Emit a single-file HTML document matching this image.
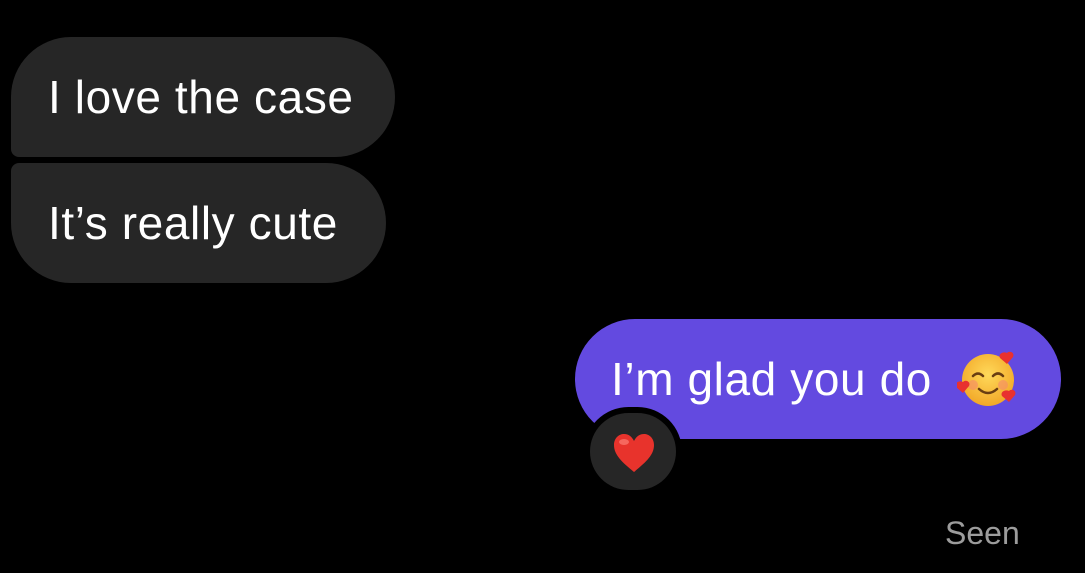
<!DOCTYPE html>
<html><head><meta charset="utf-8"><style>
html,body{margin:0;padding:0;background:#000;width:1085px;height:573px;overflow:hidden;position:relative;font-family:"Liberation Sans",sans-serif;color:#fff}
.b{position:absolute;font-size:46px;letter-spacing:0.6px;line-height:120px;box-sizing:border-box;white-space:nowrap}
.g{background:#262626}
</style></head><body>
<div class="b g" style="left:11px;top:37px;width:384px;height:120px;border-radius:60px 60px 60px 8px;padding-left:37px">I love the case</div>
<div class="b g" style="left:11px;top:163px;width:375px;height:120px;border-radius:8px 60px 60px 60px;padding-left:37px">It’s really cute</div>
<div class="b" style="left:575px;top:319px;width:486px;height:120px;border-radius:60px;background:#634ae0;padding-left:36px">I’m glad you do</div>
<svg style="position:absolute;left:957px;top:349px" width="64" height="60" viewBox="0 0 64 60">
<defs><radialGradient id="f" cx="50%" cy="40%" r="60%"><stop offset="0" stop-color="#ffd95a"/><stop offset="1" stop-color="#f2a828"/></radialGradient></defs>
<circle cx="31" cy="31" r="26" fill="url(#f)"/>
<circle cx="16" cy="36" r="5" fill="#f58a6a" opacity=".6"/><circle cx="46" cy="36" r="5" fill="#f58a6a" opacity=".6"/>
<path d="M16 27q5-5 10 0M36 27q5-5 10 0M22 40q9 8 18 0" stroke="#6a3e12" stroke-width="2.5" fill="none" stroke-linecap="round"/>
<path d="M50 4c3-3 8 0 6 4l-6 7-7-6c-2-4 3-7 7-5z" fill="#e8312f"/>
<path d="M6 33c3-3 8 0 6 4l-6 7-7-6c-2-4 3-7 7-5z" fill="#e8312f"/>
<path d="M52 42c3-3 8 0 6 4l-6 7-7-6c-2-4 3-7 7-5z" fill="#e8312f"/>
</svg>
<div style="position:absolute;left:584px;top:407px;width:98px;height:89px;border-radius:45px;background:#000"></div>
<div style="position:absolute;left:590px;top:413px;width:86px;height:77px;border-radius:39px;background:#262626"></div>
<svg style="position:absolute;left:612px;top:432px" width="44" height="42" viewBox="0 0 44 42">
<path d="M22 40C10 30 2 23 2 13 2 6 7 2 12 2c5 0 8 3 10 7 2-4 5-7 10-7 5 0 10 4 10 11 0 10-8 17-20 27z" fill="#e8332c"/>
<ellipse cx="12" cy="10" rx="5" ry="3" fill="#ff8a80" opacity=".6"/>
</svg>
<div style="position:absolute;left:945px;top:515px;font-size:32px;color:#9c9c9c">Seen</div>
</body></html>
